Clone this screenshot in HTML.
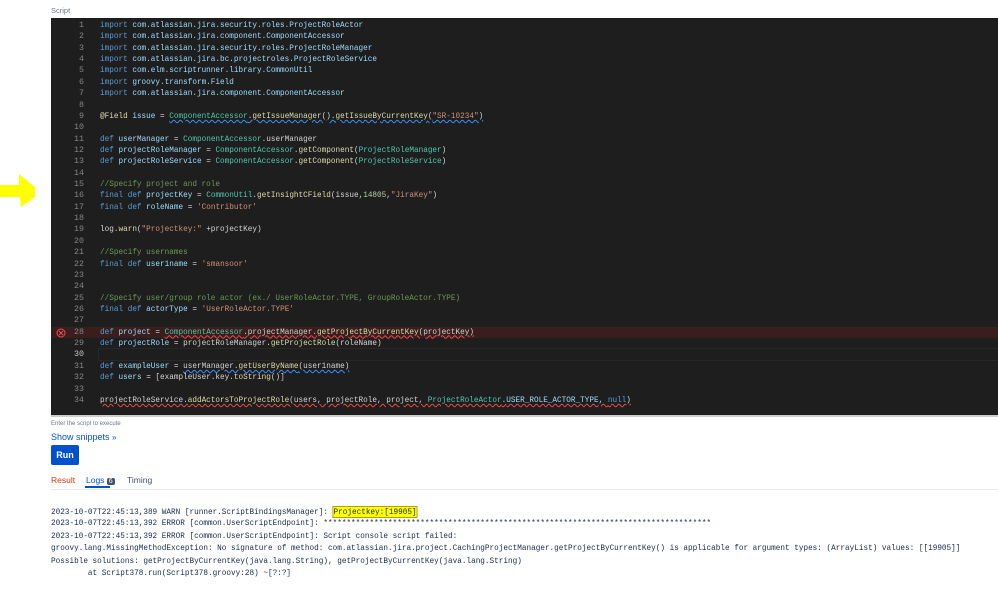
<!DOCTYPE html>
<html><head><meta charset="utf-8"><style>
body{margin:0;width:998px;height:597px;background:#fff;position:relative;overflow:hidden;font-family:"Liberation Sans",sans-serif}
.lbl{position:absolute;left:51px;top:6px;font-size:7.5px;color:#6b778c}
.ed{position:absolute;left:51px;top:18px;width:947px;height:397px;background:#1e1e1e;border-bottom:2px solid #ccc}
.ln{position:absolute;left:0;width:33px;text-align:right;font:8.3px "Liberation Mono",monospace;color:#858585;height:11.36px;line-height:11.36px}
.cd{position:absolute;left:49px;font:8.5px "Liberation Mono",monospace;color:#d4d4d4;white-space:pre;height:11.36px;line-height:11.36px;transform:scaleX(0.905);transform-origin:0 0}
.k{color:#569cd6}.c{color:#6a9955}.s{color:#ce9178}.t{color:#4ec9b0}.v{color:#9cdcfe}.y{color:#dcdcaa}.n{color:#b5cea8}
.sq{text-decoration:underline wavy #f14c4c;text-decoration-thickness:1px}
.sqb{text-decoration:underline wavy #3794ff;text-decoration-thickness:1px}
.err{position:absolute;left:0;width:947px;height:11px;background:#3a1d1d}
.cur{position:absolute;left:47px;width:900px;height:11px;border:1px solid #282828}
.log{position:absolute;left:51px;font:8.5px "Liberation Mono",monospace;color:#172b4d;white-space:pre;transform:scaleX(0.905);transform-origin:0 0}
</style></head><body>
<svg style="position:absolute;left:0;top:172px" width="36" height="36"><polygon points="0,13 19,13 19,2 35,15 35,25 21,35 20,25 0,25" fill="#ffff00"/></svg>
<div class="lbl">Script</div>
<div class="ed" id="ed"></div>
<div style="position:absolute;left:51px;top:421px;font-size:6px;color:#6b778c">Enter the script to execute</div>
<div style="position:absolute;left:51px;top:432px;font-size:9px;color:#0052cc">Show snippets <span style="font-size:8px">&#xBB;</span></div>
<div style="position:absolute;left:51px;top:445px;width:28px;height:20px;background:#0052cc;border-radius:2px;color:#fff;font-size:9px;font-weight:bold;text-align:center;line-height:20px">Run</div>
<div style="position:absolute;left:51px;top:475px;font-size:8.5px;color:#de350b">Result</div>
<div style="position:absolute;left:86px;top:475px;font-size:8.5px;color:#0052cc">Logs <span style="background:#42526e;color:#fff;font-size:7px;padding:0 2px;border-radius:2px">6</span></div>
<div style="position:absolute;left:85px;top:486px;width:25px;height:2px;background:#0052cc"></div>
<div style="position:absolute;left:127px;top:475px;font-size:8.5px;color:#42526e">Timing</div>
<div style="position:absolute;left:51px;top:489px;width:947px;height:1px;background:#ebecf0"></div>
<div class="log" style="top:507px">2023-10-07T22:45:13,389 WARN [runner.ScriptBindingsManager]: <span style="background:#ffff00;border:1px solid #b8a000">Projectkey:[19905]</span></div>
<div class="log" style="top:518px">2023-10-07T22:45:13,392 ERROR [common.UserScriptEndpoint]: ************************************************************************************</div>
<div class="log" style="top:531px">2023-10-07T22:45:13,392 ERROR [common.UserScriptEndpoint]: Script console script failed:</div>
<div class="log" style="top:543px">groovy.lang.MissingMethodException: No signature of method: com.atlassian.jira.project.CachingProjectManager.getProjectByCurrentKey() is applicable for argument types: (ArrayList) values: [[19905]]</div>
<div class="log" style="top:556px">Possible solutions: getProjectByCurrentKey(java.lang.String), getProjectByCurrentKey(java.lang.String)</div>
<div class="log" style="top:568px">        at Script378.run(Script378.groovy:28) ~[?:?]</div>
<script>
var L=[
'<span class="k">import</span> <span class="v">com.atlassian.jira.security.roles.ProjectRoleActor</span>',
'<span class="k">import</span> <span class="v">com.atlassian.jira.component.ComponentAccessor</span>',
'<span class="k">import</span> <span class="v">com.atlassian.jira.security.roles.ProjectRoleManager</span>',
'<span class="k">import</span> <span class="v">com.atlassian.jira.bc.projectroles.ProjectRoleService</span>',
'<span class="k">import</span> <span class="v">com.elm.scriptrunner.library.CommonUtil</span>',
'<span class="k">import</span> <span class="v">groovy.transform.Field</span>',
'<span class="k">import</span> <span class="v">com.atlassian.jira.component.ComponentAccessor</span>',
'',
'<span class="y">@Field</span> <span class="v">issue</span> = <span class="sqb"><span class="t">ComponentAccessor</span>.<span class="y">getIssueManager</span>().<span class="y">getIssueByCurrentKey</span>(<span class="s">"SR-10234"</span>)</span>',
'',
'<span class="k">def</span> <span class="v">userManager</span> = <span class="t">ComponentAccessor</span>.userManager',
'<span class="k">def</span> <span class="v">projectRoleManager</span> = <span class="t">ComponentAccessor</span>.<span class="y">getComponent</span>(<span class="t">ProjectRoleManager</span>)',
'<span class="k">def</span> <span class="v">projectRoleService</span> = <span class="t">ComponentAccessor</span>.<span class="y">getComponent</span>(<span class="t">ProjectRoleService</span>)',
'',
'<span class="c">//Specify project and role</span>',
'<span class="k">final def</span> <span class="v">projectKey</span> = <span class="t">CommonUtil</span>.<span class="y">getInsightCField</span>(issue,<span class="n">14805</span>,<span class="s">"JiraKey"</span>)',
'<span class="k">final def</span> <span class="v">roleName</span> = <span class="s">\'Contributor\'</span>',
'',
'log.<span class="y">warn</span>(<span class="s">"Projectkey:"</span> +projectKey)',
'',
'<span class="c">//Specify usernames</span>',
'<span class="k">final def</span> <span class="v">user1name</span> = <span class="s">\'smansoor\'</span>',
'','',
'<span class="c">//Specify user/group role actor (ex./ UserRoleActor.TYPE, GroupRoleActor.TYPE)</span>',
'<span class="k">final def</span> <span class="v">actorType</span> = <span class="s">\'UserRoleActor.TYPE\'</span>',
'',
'<span class="k">def</span> <span class="v">project</span> = <span class="sq"><span class="t">ComponentAccessor</span>.projectManager.<span class="y">getProjectByCurrentKey</span>(projectKey)</span>',
'<span class="k">def</span> <span class="v">projectRole</span> = projectRoleManager.<span class="y">getProjectRole</span>(roleName)',
'',
'<span class="k">def</span> <span class="v">exampleUser</span> = <span class="sqb">userManager.<span class="y">getUserByName</span>(user1name)</span>',
'<span class="k">def</span> <span class="v">users</span> = [exampleUser.key.<span class="y">toString</span>()]',
'',
'<span class="sq">projectRoleService.<span class="y">addActorsToProjectRole</span>(users, projectRole, project, <span class="t">ProjectRoleActor</span>.<span class="v">USER_ROLE_ACTOR_TYPE</span>, <span class="k">null</span>)</span>'
];
var h='',lh=11.36,t0=2;
h+='<div class="err" style="top:'+(t0+27*lh)+'px"></div>';
h+='<div class="cur" style="top:'+(t0+29*lh-1)+'px"></div>';
h+='<svg style="position:absolute;left:5px;top:'+(t0+27*lh+1)+'px" width="10" height="10"><circle cx="5" cy="5" r="4" fill="none" stroke="#f14c4c"/><path d="M3,3L7,7M7,3L3,7" stroke="#f14c4c"/></svg>';
for(var i=0;i<L.length;i++){var t=t0+i*lh;
h+='<div class="ln" style="top:'+t+'px;'+(i==29?'color:#c6c6c6':'')+'">'+(i+1)+'</div><div class="cd" style="top:'+t+'px">'+L[i]+'</div>';}
document.getElementById('ed').innerHTML=h;
</script>
</body></html>
